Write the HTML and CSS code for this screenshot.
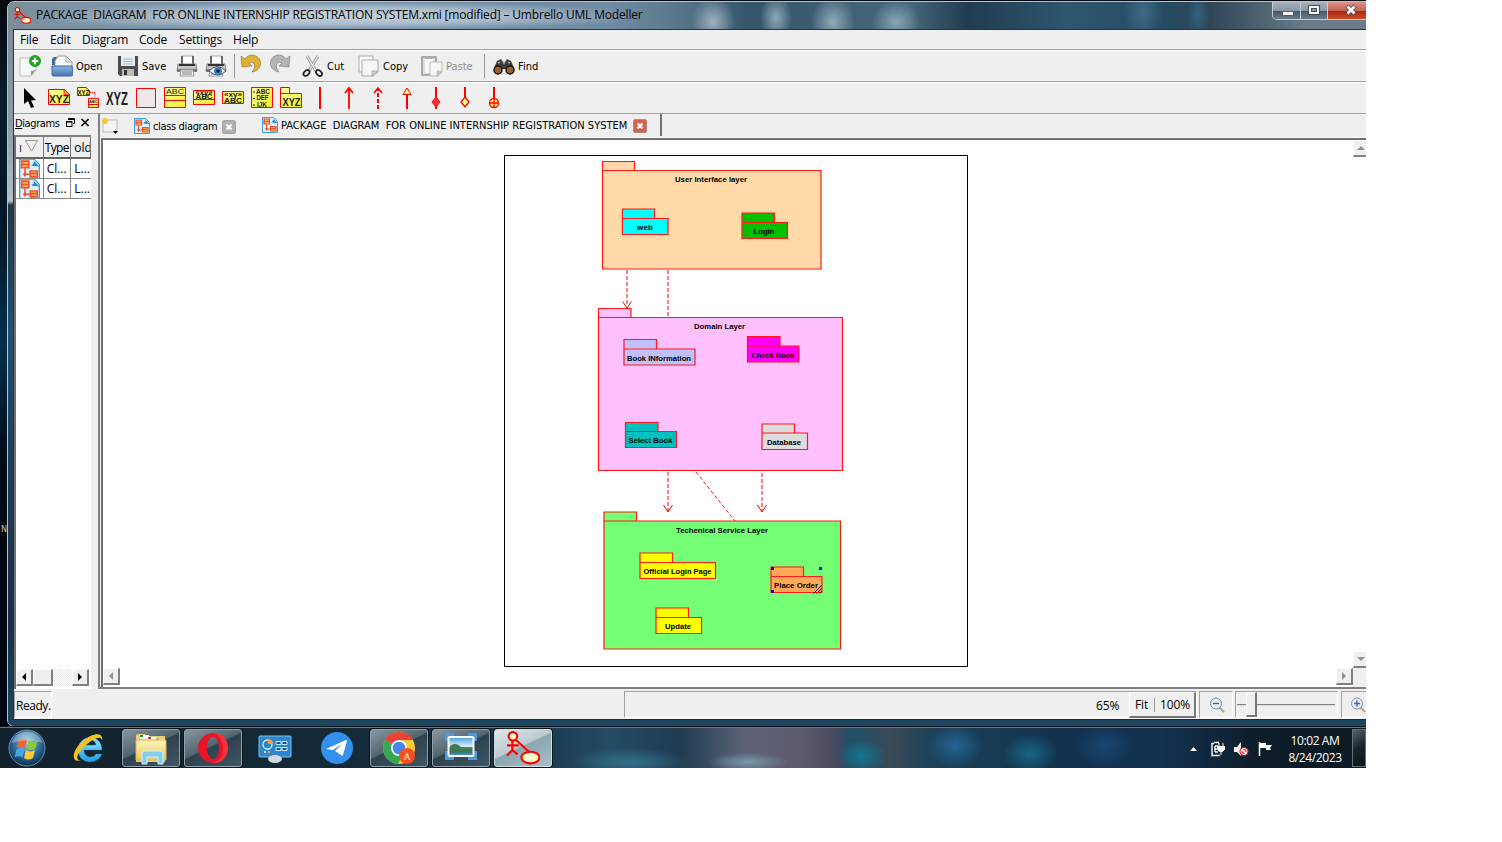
FILE: index.html
```html
<!DOCTYPE html>
<html lang="en">
<head>
<meta charset="utf-8">
<title>Umbrello UML Modeller</title>
<link rel="stylesheet" href="styles.css">
</head>
<body>
<svg width="0" height="0" class="defs" aria-hidden="true">
  <defs>
    <linearGradient id="yel" x1="0" y1="0" x2="1" y2="1"><stop offset="0" stop-color="#ffffa8"/><stop offset="1" stop-color="#f4ee20"/></linearGradient>
    <linearGradient id="blu" x1="0" y1="0" x2="0" y2="1"><stop offset="0" stop-color="#8ab4e4"/><stop offset="1" stop-color="#4678b4"/></linearGradient>
    <radialGradient id="orb" cx=".5" cy=".35" r=".65"><stop offset="0" stop-color="#9cd0ea"/><stop offset=".55" stop-color="#2f6f9f"/><stop offset="1" stop-color="#0c2f52"/></radialGradient>
    <linearGradient id="ieg" x1="0" y1="0" x2="0" y2="1"><stop offset="0" stop-color="#8be4ff"/><stop offset="1" stop-color="#1f9fe4"/></linearGradient>
    <linearGradient id="fold" x1="0" y1="0" x2="0" y2="1"><stop offset="0" stop-color="#fff4b8"/><stop offset="1" stop-color="#e8c860"/></linearGradient>
    <linearGradient id="sky" x1="0" y1="0" x2="0" y2="1"><stop offset="0" stop-color="#4a9ae8"/><stop offset=".5" stop-color="#d8f0fa"/><stop offset=".55" stop-color="#4d8a4c"/><stop offset=".75" stop-color="#2b6b70"/><stop offset="1" stop-color="#5aa0c4"/></linearGradient>
    <symbol id="uml" viewBox="0 0 32 32">
      <path d="M6 9v9M1 13.500h11M6 18l-5 5M6 18l5 4M9 8l13 12" fill="none" stroke="red" stroke-width="2"/>
      <circle cx="6.500" cy="5" r="4" fill="#ffffc8" stroke="red" stroke-width="2"/>
      <ellipse cx="23" cy="25" rx="8.500" ry="5.500" fill="#ffffc8" stroke="red" stroke-width="2"/>
    </symbol>
    <symbol id="cls" viewBox="0 0 16 16" preserveAspectRatio="xMidYMid slice">
      <path d="M.5.500h11l4 4v11H.500z" fill="#dff1fc" stroke="#3aa0e0"/>
      <path d="M10 .500c3 2 1 4-1 4.500 3 1.500 5 .5 7 1.500z" fill="#1d8cdc"/>
      <path d="M2 2h5.500v5H2zM8.500 9.500H14v4.500H8.500z" fill="#ffb060" stroke="#f05028" stroke-width="1.200"/>
      <path d="M2 4.500h5M9 11.500h5M4.500 7.500v4.500h3.500" fill="none" stroke="#f05028" stroke-width="1.100"/>
      <path d="M3 12l1.500-2L6 12l-1.500 2z" fill="#f05028"/>
    </symbol>
    <symbol id="xbtn" viewBox="0 0 14 14">
      <rect x=".5" y=".5" width="13" height="13" rx="1.500" fill="currentColor" stroke="#0003"/>
      <path d="M4.500 4.500l5 5M9.500 4.500l-5 5" stroke="#fff" stroke-width="2.200"/>
    </symbol>
    <symbol id="printer" viewBox="0 0 22 22">
      <path d="M6 1h11v9H6z" fill="#fff" stroke="#aaa"/><path d="M6 1v8M17 1v8" stroke="#444" stroke-width="1.500"/>
      <path d="M2 9h18l1 7H1z" fill="#c4c4c4" stroke="#888"/><path d="M3 10h16" stroke="#333" stroke-width="2"/>
      <path d="M1 14h20v3H1z" fill="#777"/><path d="M5 15h12l1 6H4z" fill="#fafafa" stroke="#999"/><path d="M6 17h10M6 19h10" stroke="#777"/>
    </symbol>
    <symbol id="undo" viewBox="0 0 22 22">
      <path d="M1 2l1 11 10-1-3-3c4-2 7 1 5 6l-2 3c9-1 12-12 4-16-4-2-8-1-11 3z" fill="currentColor" stroke="#0005" stroke-width=".8"/>
    </symbol>
  </defs>
</svg>

<div class="desktop">
  <span class="desk-label">N</span>
  <main class="window">
    <header class="titlebar">
      <svg class="app-icon" viewBox="0 0 32 32"><use href="#uml"/></svg>
      <h1 class="title">PACKAGE&nbsp; DIAGRAM&nbsp; FOR ONLINE INTERNSHIP REGISTRATION SYSTEM.xmi [modified] – Umbrello UML Modeller</h1>
      <div class="controls">
        <i class="ctl"><svg width="28" height="18"><rect x="9.500" y="9.500" width="11" height="4" fill="#fff" stroke="#555c66"/></svg></i>
        <i class="ctl ctl-max"><svg width="27" height="18"><rect x="7.500" y="3.500" width="11" height="9" fill="#fff" stroke="#444c58"/><rect x="10.500" y="6.500" width="5" height="3" fill="#8b98a4" stroke="#444c58"/></svg></i>
        <i class="ctl ctl-close"><svg width="38" height="18"><path d="M20 4l8 8M28 4l-8 8" stroke="#504050" stroke-width="4.500"/><path d="M20.500 4.500l7 7M27.500 4.500l-7 7" stroke="#fff" stroke-width="2.800"/></svg></i>
      </div>
    </header>

    <div class="client">
      <nav class="menubar"><span class="m-file">File</span><span class="m-edit">Edit</span><span class="m-diag">Diagram</span><span class="m-code">Code</span><span class="m-set">Settings</span><span>Help</span></nav>

      <div class="toolbar">
        <span class="tool"><svg class="ic" viewBox="0 0 22 22"><path d="M1 3h16v12l-5 6H1z" fill="#f8f8f8" stroke="#bbb"/><path d="M17 15l-5 6v-5z" fill="#999"/><circle cx="16" cy="6" r="5.600" fill="#18a818" stroke="#0a7a0a" stroke-width=".6"/><path d="M16 2.800v6.400M12.800 6h6.400" stroke="#fff" stroke-width="2.200"/></svg></span>
        <span class="tool"><svg class="ic" viewBox="0 0 22 22"><path d="M1 4l2-2h7l1 8H1z" fill="#3a68a8"/><path d="M4 6l3-5h8l6 6v5H4z" fill="#f8f8f8" stroke="#999"/><path d="M15 1v6h6z" fill="#ddd" stroke="#999" stroke-width=".7"/><path d="M1 11h20l1 8q0 2-2 2H2q-1 0-1-2z" fill="url(#blu)" stroke="#3a68a8"/></svg>Open</span>
        <span class="tool"><svg class="ic" viewBox="0 0 22 22"><path d="M1 1h20v20H3l-2-2z" fill="#4c4c4c"/><path d="M4 1h14v10H4z" fill="#e6eef8"/><path d="M6 4h10M6 6.500h10M6 9h10" stroke="#a8c0d8"/><path d="M5 14h12v7H5z" fill="#bbb"/><path d="M7 15h3v5H7z" fill="#333"/></svg>Save</span>
        <span class="tool"><svg class="ic"><use href="#printer"/></svg></span>
        <span class="tool"><svg class="ic" viewBox="0 0 22 22"><use href="#printer"/><path d="M4 16q8-9 17 0-8 8-17 0z" fill="#f0f4f8" stroke="#555"/><circle cx="13" cy="16" r="4" fill="#3a80c0"/><circle cx="13" cy="16" r="1.600" fill="#111"/></svg></span>
        <i class="sep"></i>
        <span class="tool gold"><svg class="ic up"><use href="#undo"/></svg></span>
        <span class="tool mute"><svg class="ic up flip"><use href="#undo"/></svg></span>
        <span class="tool"><svg class="ic" viewBox="0 0 22 22"><path d="M5 1l9 15M16 1L7 16" stroke="#999" stroke-width="3"/><path d="M5 1l9 15M16 1L7 16" stroke="#eee" stroke-width="1.200"/><ellipse cx="4.500" cy="18" rx="3.500" ry="2.300" transform="rotate(-45 4.500 18)" fill="none" stroke="#222" stroke-width="1.800"/><ellipse cx="17" cy="18" rx="3.500" ry="2.300" transform="rotate(45 17 18)" fill="none" stroke="#222" stroke-width="1.800"/></svg>Cut</span>
        <span class="tool"><svg class="ic" viewBox="0 0 22 22"><path d="M1 1h14v16H1z" fill="#fafafa" stroke="#aaa"/><path d="M4 5h16v12l-5 4H4z" fill="#f6f6f6" stroke="#aaa"/><path d="M20 16l-6 5v-5z" fill="#ccc" stroke="#999" stroke-width=".6"/></svg>Copy</span>
        <span class="tool off"><svg class="ic" viewBox="0 0 22 22"><path d="M1 2h14v18H1z" fill="#ddd" stroke="#999" stroke-width="1.600"/><path d="M4 4h8v14H4z" fill="#f8f8f8"/><path d="M4 4q4-6 8 0z" fill="#aaa"/><path d="M9 7h12v10l-4 4H9z" fill="#f6f6f6" stroke="#bbb"/><path d="M21 16l-5 5v-5z" fill="#ccc" stroke="#aaa" stroke-width=".6"/></svg>Paste</span>
        <i class="sep"></i>
        <span class="tool"><svg class="ic" viewBox="0 0 22 22"><path d="M4 6l4-2 2 3h2l2-3 4 2 3 7v4H13v-3H9v3H1v-4z" fill="#3c3c3c"/><path d="M5 8l2-1M15 7l2 1" stroke="#aaa" stroke-width="1.500"/><circle cx="5" cy="15" r="4" fill="#a06030" stroke="#111" stroke-width="1.500"/><circle cx="17" cy="15" r="4" fill="#a06030" stroke="#111" stroke-width="1.500"/><circle cx="11" cy="8" r="1.300" fill="#999"/></svg>Find</span>
      </div>

      <div class="palette">
        <svg viewBox="0 0 22 22"><path d="M5 1l12 12-5 .5 3 6.500-3 1-3-7-4 3z" fill="#000"/></svg>
        <svg viewBox="0 0 22 22"><path d="M.5 2.500h16l5 5v10H.500z" fill="url(#yel)" stroke="red"/><path d="M16 2v6h6z" fill="#ff9820" stroke="red" stroke-width=".7"/><text class="gl wide" x="11" y="16" textLength="20" lengthAdjust="spacingAndGlyphs">XYZ</text></svg>
        <svg viewBox="0 0 22 22"><path d="M.5.500h9l3 3v5H.500z" fill="url(#yel)" stroke="red"/><path d="M9 0v4h4z" fill="#ff9820"/><text class="gl tiny" x="6.500" y="7.500" textLength="12" lengthAdjust="spacingAndGlyphs">XYZ</text><path d="M13 5.500h5v5" fill="none" stroke="red" stroke-dasharray="1 1"/><path d="M11.500 11.500h10v9h-10zM11.500 17.500h10" fill="url(#yel)" stroke="red"/><text class="gl micro" x="16.500" y="16" textLength="9">ABC</text></svg>
        <svg viewBox="0 0 22 22"><text class="gl big" x="11" y="18" textLength="22" lengthAdjust="spacingAndGlyphs">XYZ</text></svg>
        <svg viewBox="0 0 22 22"><path d="M1.500 1.500h19v19h-19z" fill="#f0e8e8" stroke="red"/></svg>
        <svg viewBox="0 0 22 22"><path d="M.5.500h21v20H.500zM.5 8.500h21M.5 13.500h21" fill="url(#yel)" stroke="red"/><text class="gl reg" x="11" y="7" textLength="18" lengthAdjust="spacingAndGlyphs">ABC</text></svg>
        <svg viewBox="0 0 22 22"><path d="M.5 3.500h21v14H.500zM.5 12.500h21" fill="url(#yel)" stroke="red"/><text class="gl tiny" x="11" y="7.500" textLength="17" lengthAdjust="spacingAndGlyphs">«xy»</text><text class="gl tiny" x="11" y="12" textLength="17" lengthAdjust="spacingAndGlyphs">ABC</text></svg>
        <svg viewBox="0 0 22 22"><path d="M.5 4.500h21v12H.500z" fill="url(#yel)" stroke="red"/><text class="gl tiny" x="11" y="9.500" textLength="18" lengthAdjust="spacingAndGlyphs">«xy»</text><text class="gl small" x="11" y="15.500" textLength="18" lengthAdjust="spacingAndGlyphs">ABC</text></svg>
        <svg viewBox="0 0 22 22"><path d="M.5.500h21v20H.500z" fill="url(#yel)" stroke="red"/><text class="gl tiny" x="12" y="6.500" textLength="14" lengthAdjust="spacingAndGlyphs">ABC</text><text class="gl tiny" x="11.500" y="13" textLength="12" lengthAdjust="spacingAndGlyphs">DEF</text><text class="gl tiny" x="11" y="19.500" textLength="10" lengthAdjust="spacingAndGlyphs">IJK</text><path d="M2 5h2M2 11.500h2M2 18h2" stroke="#222"/></svg>
        <svg viewBox="0 0 22 22"><path d="M.5.500h9v6h12v14H.500zM.5 6.500h9" fill="url(#yel)" stroke="red"/><text class="gl wide" x="11.500" y="19" textLength="18" lengthAdjust="spacingAndGlyphs">XYZ</text></svg>
        <svg viewBox="0 0 22 22"><path d="M11 0v22" stroke="red" stroke-width="2"/></svg>
        <svg viewBox="0 0 22 22"><path d="M11 1v21M7 6l4-5 4 5" fill="none" stroke="red" stroke-width="1.800"/></svg>
        <svg viewBox="0 0 22 22"><path d="M11 22V1" stroke="red" stroke-width="2" stroke-dasharray="4 2"/><path d="M7 6l4-5 4 5" fill="none" stroke="red" stroke-width="1.600"/></svg>
        <svg viewBox="0 0 22 22"><path d="M11 7v15" stroke="red" stroke-width="2"/><path d="M11 1l4 6.500H7z" fill="#ffff70" stroke="red"/></svg>
        <svg viewBox="0 0 22 22"><path d="M11 0v22" stroke="red" stroke-width="2"/><path d="M11 10l4 5-4 5-4-5z" fill="#f83030" stroke="red"/></svg>
        <svg viewBox="0 0 22 22"><path d="M11 0v11" stroke="red" stroke-width="2"/><path d="M11 10l4 5-4 5-4-5z" fill="#ffff90" stroke="red" stroke-width="1.300"/></svg>
        <svg viewBox="0 0 22 22"><path d="M11 0v11" stroke="red" stroke-width="2"/><circle cx="11" cy="16" r="4.500" fill="#ffff70" stroke="red" stroke-width="1.300"/><path d="M11 12v9M6 16h10" stroke="red" stroke-width="1.300"/></svg>
      </div>

      <div class="work">
        <aside class="dock">
          <div class="dock-head"><span class="dock-name"><u>D</u>iagrams</span><svg width="24" height="12"><path d="M3.500 3V1.500h6v5H8M1 4.500h6v5H1.500V4M1 5h6M3.500 2.500h6" fill="none" stroke="#000"/><path d="M16.500 2l7 7M23.500 2l-7 7" stroke="#000" stroke-width="1.600"/></svg></div>
          <div class="tree">
            <div class="row head"><span class="c1"><b>ı</b><svg width="13" height="12"><path d="M.5.500h12L6.500 11z" fill="none" stroke="#999"/></svg></span><span class="c2"><em>Type</em></span><span class="c3">old</span></div>
            <div class="row"><span class="c1"><svg class="rowic"><use href="#cls"/></svg></span><span class="c2">Cl...</span><span class="c3">L...</span></div>
            <div class="row"><span class="c1"><svg class="rowic"><use href="#cls"/></svg></span><span class="c2">Cl...</span><span class="c3">L...</span></div>
            <div class="hscroll"><i class="sb"><svg width="6" height="8"><path d="M5 0v8L1 4z"/></svg></i><i class="sb thumb"></i><i class="track"></i><i class="sb"><svg width="6" height="8"><path d="M1 0v8l4-4z"/></svg></i></div>
          </div>
        </aside>

        <section class="editor">
          <div class="tabs">
            <svg class="newtab" viewBox="0 0 20 18"><path d="M2 3h14v10l-2 2H2z" fill="#f4f4f4" stroke="#bbb"/><circle cx="4" cy="4" r="3" fill="#f0c838"/><path d="M12 14h5l-2.500 3z"/></svg>
            <div class="tab"><svg class="tabic"><use href="#cls"/></svg><span class="tab-a">class diagram</span><svg class="x gray"><use href="#xbtn"/></svg></div>
            <div class="tab active"><svg class="tabic"><use href="#cls"/></svg><span class="tab-b">PACKAGE&nbsp; DIAGRAM&nbsp; FOR ONLINE INTERNSHIP REGISTRATION SYSTEM</span><svg class="x red"><use href="#xbtn"/></svg></div>
          </div>
          <div class="canvas">
            <svg class="diagram" viewBox="504 154 465 514" width="465" height="514">
              <path d="M504 155.500h463.500v511H504.500V155" fill="#fff" stroke="#000"/>
              <g class="pkg">
                <path fill="#ffdaa8" d="M602.500 170.500v-9h32v9M602.500 170.500h218.500v98.500h-218.500z"/>
                <path fill="#0ff" d="M622.500 218v-9h32v9M622.500 218.500h45.500v16h-45.500z"/>
                <path fill="#00c000" d="M742 222v-9h32.500v9M742 222.500h45.500v16h-45.500z"/>
                <path fill="#ffc0ff" d="M598.500 317.500v-9h32.500v9M598.500 317.500h244v153h-244z"/>
                <path fill="#c0c0ff" d="M624 348.500v-9h32.500v9M624 349h71v16h-71z"/>
                <path fill="#f0f" d="M747.500 346v-9.500h32.500v9.500M747.500 346h51.500v16h-51.500z"/>
                <path fill="#00c0c0" d="M625.500 431.500v-9h32.500v9M625.500 431.500h51v16h-51z"/>
                <path fill="#dcdcdc" d="M762 433v-9h32.500v9M762 433h45.500v16.500h-45.500z"/>
                <path fill="#75ff75" d="M604 521v-9h32.500v9M604 521h236.500v128h-236.500z"/>
                <path fill="#ff0" d="M640 562v-9h32.500v9M640 562.500h75.500v16h-75.500z"/>
                <path fill="#ffa858" d="M771 576v-9h32.500v9M771 576.500h51v16h-51z"/>
                <path fill="#ff0" d="M656 617v-9h32.500v9M656 617.500h45.500v16h-45.500z"/>
              </g>
              <g class="dep"><path d="M627 270v36"/><path d="M668 270v47"/><path d="M668 472v39"/><path d="M762 473v38"/><path class="thin" d="M696 472l39 49"/></g>
              <g class="arrows"><path d="M622.500 301.500l4.500 6.500 4.500-6.500"/><path d="M663.500 505l4.500 7 4.500-7"/><path d="M757.500 505l4.500 7 4.500-7"/></g>
              <g class="lbl">
                <text x="711" y="182" textLength="72" lengthAdjust="spacingAndGlyphs">User Interface layer</text>
                <text x="645" y="229.500" textLength="16">web</text>
                <text x="764" y="234" textLength="21">Login</text>
                <text x="719.500" y="329" textLength="51" lengthAdjust="spacingAndGlyphs">Domain Layer</text>
                <text x="659" y="361" textLength="64" lengthAdjust="spacingAndGlyphs">Book INformation</text>
                <text x="773" y="358" textLength="43" lengthAdjust="spacingAndGlyphs">Check Book</text>
                <text x="650.500" y="443" textLength="44" lengthAdjust="spacingAndGlyphs">Select Book</text>
                <text x="784" y="445" textLength="34" lengthAdjust="spacingAndGlyphs">Database</text>
                <text x="722" y="533" textLength="92" lengthAdjust="spacingAndGlyphs">Techenical Service Layer</text>
                <text x="677.500" y="574" textLength="68" lengthAdjust="spacingAndGlyphs">Official Login Page</text>
                <text x="796" y="588" textLength="44" lengthAdjust="spacingAndGlyphs">Place Order</text>
                <text x="678" y="629" textLength="26" lengthAdjust="spacingAndGlyphs">Update</text>
              </g>
              <path d="M771 567h3v3h-3zM819 567h3v3h-3zM771 590h3v3h-3z" fill="#00f"/>
              <path d="M813.500 593.500l8-8M816.500 593.500l5-5M819.500 593.500l2.500-2.500" stroke="#000" stroke-width=".9"/>
            </svg>
            <div class="vbar"><i class="sb"><svg width="10" height="8"><path d="M1 6h8L5 2z" fill="#909090"/></svg></i><i class="sb"><svg width="10" height="8"><path d="M1 2h8L5 6z" fill="#909090"/></svg></i></div>
            <div class="hbar"><i class="sb"><svg width="6" height="8"><path d="M5 0v8L1 4z" fill="#909090"/></svg></i><i class="sb"><svg width="6" height="8"><path d="M1 0v8l4-4z" fill="#909090"/></svg></i><i class="corner"></i></div>
          </div>
        </section>
      </div>

      <footer class="status">
        <span class="ready">Ready.</span>
        <span class="msg"><span class="pct">65%</span><span class="fit"><span>Fit</span><span class="hundred">100%</span></span></span>
        <span class="zo"><svg width="17" height="18" viewBox="0 0 17 18"><path d="M10 11l5 5" stroke="#b0a090" stroke-width="2"/><circle cx="7" cy="7.500" r="5.500" fill="#e4eef8" stroke="#7890b0"/><path d="M4 7.500h6" stroke="#4068a0" stroke-width="1.400"/></svg></span>
        <span class="slider"><i class="groove"></i><i class="knob"></i><i class="groove rest"></i></span>
        <span class="zi"><svg width="17" height="18" viewBox="0 0 17 18"><path d="M10 11l5 5" stroke="#b0a090" stroke-width="2"/><circle cx="7" cy="7.500" r="5.500" fill="#e4eef8" stroke="#7890b0"/><path d="M4 7.500h6M7 4.500v6" stroke="#4068a0" stroke-width="1.400"/></svg></span>
      </footer>
    </div>
  </main>

  <footer class="taskbar">
    <div class="start"><svg width="40" height="38" viewBox="0 0 40 38"><circle cx="20" cy="19" r="18" fill="url(#orb)" stroke="#6a8ea4"/><path d="M12 11q5-3 8 0l-2 8q-4-3-8 0z" fill="#f0642c"/><path d="M21.500 11.500q4 3 9 0l-2 8q-5 3-9 0z" fill="#8cc83c"/><path d="M9.500 20.500q4-3 8 0l-2 8q-4-3-8 0z" fill="#4aa4e8"/><path d="M19 21q4 3 9 0l-2 8q-5 3-9 0z" fill="#fccc38"/><path d="M4 14Q9 3 20 2.500T36 14q-16-5-32 0z" fill="#fff" opacity=".3"/></svg></div>
    <div class="task"><svg width="34" height="34" viewBox="0 0 34 34"><path d="M30 19H12c0 8 9 9 12 4h6c-5 12-24 10-24-4C6 3 30 2 30 19zM12 14h12c-1-7-11-7-12 0z" fill="url(#ieg)" fill-rule="evenodd" stroke="#1474b8" stroke-width=".4"/><path d="M30 10C32 0 20 2 11 10-1 20-1 33 9 29c-5 1-6-5 4-14C22 7 30 4 30 10z" fill="#f4c424"/></svg></div>
    <div class="task on"><svg width="34" height="34" viewBox="0 0 34 34"><path d="M2 5l1-2h8l1 2h19v26H2z" fill="#e8d080"/><path d="M6 4h9v4H6zM13 6h9v4h-9zM21 8h9v3h-9z" fill="#fff"/><path d="M6 4h3v2H6z" fill="#1a9c28"/><path d="M14 6h3v2h-3z" fill="#d83020"/><path d="M22 8h3v2h-3z" fill="#2888d8"/><path d="M2 9h30v20H2z" fill="url(#fold)" stroke="#d8b850"/><path d="M8 33V23q0-3 3-3h15q3 0 3 3v10h-5v-7H13v7z" fill="#88cce8" stroke="#d0f0ff"/></svg></div>
    <div class="task on"><svg width="34" height="34" viewBox="0 0 34 34"><path fill-rule="evenodd" d="M17 2a15 15 0 1 0 0 30 15 15 0 0 0 0-30zm0 4c4 0 6 5 6 11s-2 11-6 11-6-5-6-11 2-11 6-11z" fill="#e81428"/><path d="M17 2c10-1 15 8 15 15s-5 16-15 15c9-3 10-9 10-15S24 4 17 2z" fill="#ff3040"/></svg></div>
    <div class="task"><svg width="34" height="34" viewBox="0 0 34 34"><rect x="1" y="5" width="32" height="21" rx="1" fill="#2f86cc" stroke="#78c4f0"/><circle cx="9.500" cy="13.500" r="4.500" fill="none" stroke="#d8f0ff" stroke-width="1.300"/><path d="M10 13V8q5 0 5 5z" fill="#fca030"/><path d="M18 10.500h5v3h-5zM24 10.500h5v3h-5zM18 16.500h5v3h-5zM24 16.500h5v3h-5z" fill="#0a5c9c" stroke="#c8ecff"/><circle cx="7" cy="21" r="1" fill="#fff"/><circle cx="11" cy="21" r="1.200" fill="#fca030"/><ellipse cx="17" cy="28" rx="7" ry="4" fill="#d4d8dc"/></svg></div>
    <div class="task"><svg width="34" height="34" viewBox="0 0 34 34"><circle cx="17" cy="17" r="16" fill="#3390ec"/><path d="M6 18L26 9q1 0 1 1l-4 14q-1 1-2 0l-6-4 7-7-9 6z" fill="#fff"/></svg></div>
    <div class="task on"><svg width="34" height="34" viewBox="0 0 34 34"><circle cx="17" cy="17" r="16" fill="#fcc934"/><path d="M17 17L3.200 9A16 16 0 0 1 31 9H17z" fill="#ea4335"/><path d="M3.200 9a16 16 0 0 0 13 24l6-13z" fill="#34a853"/><circle cx="17" cy="17" r="8" fill="#fff"/><circle cx="17" cy="17" r="6.300" fill="#4285f4"/><circle cx="25" cy="25" r="8" fill="#f4511e"/><text class="badge" x="25" y="28.500">A</text></svg></div>
    <div class="task on"><svg width="34" height="34" viewBox="0 0 34 34"><path d="M3 10V4h7M24 4h7v6M31 20v7h-7M10 27H3v-7" fill="none" stroke="#4a9ae0" stroke-width="4"/><rect x="4.500" y="6" width="25" height="19" rx="1" fill="url(#sky)" stroke="#f8f8f8" stroke-width="2"/><path d="M6 15q6-5 13 3l9 1v2H6z" fill="#3f7a50"/></svg></div>
    <div class="task on current"><svg width="34" height="34" viewBox="0 0 34 34"><use href="#uml" width="34" height="34"/></svg></div>
    <div class="tray">
      <svg width="86" height="18" viewBox="0 0 86 18"><path d="M1 11h7L4.500 7z" fill="#fff"/><path d="M30 14.500v1h-7v-12h2M25 2.500h5M26 6v6M26 6h3M26 9h2M26 12h3" fill="none" stroke="#fff" stroke-width="1.400"/><path d="M28.500 6.500h7v3q-1 2-3.500 2t-3.500-2zM32 11v4M30 3v3M34 3v3" fill="#fff" stroke="#fff"/><path d="M45 7h3l4-5v14l-4-4h-3z" fill="#f4f4f4"/><circle cx="55" cy="11.500" r="4.500" fill="#e01818"/><path d="M53 9.500l4 4" stroke="#fff" stroke-width="1.800"/><circle cx="55" cy="11.500" r="3" fill="none" stroke="#fff"/><path d="M70.500 2v14" stroke="#fff" stroke-width="1.500"/><path d="M71 3h6v2h6l-2 3 1 2h-5V8h-6z" fill="#fff"/></svg>
    </div>
    <div class="clock"><span>10:02 AM</span><span>8/24/2023</span></div>
    <div class="peek"></div>
  </footer>
</div>
</body>
</html>
```
FILE: styles.css
```css
* { box-sizing: border-box; }
body { margin: 0; background: #fff; font-family: "Open Sans", "Noto Sans", sans-serif; color: #000; overflow: hidden; }
.defs { position: absolute; }
i, em { font-style: normal; }
span, h1 { white-space: pre; }

.desktop {
  position: relative;
  width: 1366px;
  height: 768px;
  overflow: hidden;
  padding: 1px 0 0 7px;
  display: flex;
  flex-direction: column;
  background: linear-gradient(180deg, #05080f 0, #0a1c2c 100px, #031726 230px, #043050 340px, #020e1c 450px, #010712 560px, #010712 100%);
}
.desk-label { position: absolute; left: 1px; top: 523px; font: 9px/13px "DejaVu Sans Condensed", sans-serif; color: #b8c8b0; letter-spacing: -1px; }

.window {
  width: 1380px;
  height: 726px;
  flex: none;
  border: 1px solid #b4c4cc;
  border-radius: 7px 0 0 7px;
  padding-left: 5px;
  background: linear-gradient(180deg, #7b8995 0, #8c9aa6 120px, #b4c0c8 199px, #21374a 203px, #24506c 330px, #1c3c54 480px, #143048 620px, #1e4660 100%);
}
.titlebar {
  height: 27px;
  margin-left: -5px;
  display: flex;
  border-radius: 6px 0 0 0;
  background:
    radial-gradient(ellipse 310px 15px at 330px 14px, #d5dfe8e0 0, #c4d0dcb0 55%, transparent 100%),
    radial-gradient(ellipse 22px 26px at 705px 20px, #9db2c0, transparent),
    radial-gradient(ellipse 16px 24px at 768px 16px, #8ea8b8, transparent),
    radial-gradient(ellipse 22px 26px at 825px 20px, #90aab8, transparent),
    radial-gradient(ellipse 24px 22px at 888px 20px, #86a6b6, transparent),
    radial-gradient(ellipse 20px 30px at 1135px 10px, #3f6a88, transparent),
    radial-gradient(ellipse 12px 26px at 1190px 12px, #356080, transparent),
    linear-gradient(90deg, #7c8c98 0, #7d93a5 60px, #6e8ba4 300px, #6f8ca3 600px, #5d7b8e 660px, #35566b 740px, #47687b 900px, #203c50 960px, #2e566f 1060px, #264b62 1160px, #2e4556 1200px, #6b7c88 1300px);
}
.app-icon { width: 17px; height: 17px; margin: 5px 0 0 6px; flex: none; }
.title { margin: 0 0 0 5px; padding-top: 3px; width: 1236px; font-size: 12px; line-height: 20px; font-weight: 400; letter-spacing: -0.175px; }
.controls { display: flex; height: 18px; border: 1px solid #c4ced4; border-top: 0; border-radius: 0 0 0 5px; overflow: hidden; flex: none; }
.ctl { width: 28px; height: 18px; border-right: 1px solid #c4ced4; background: linear-gradient(#a8b4be 0, #8797a3 48%, #485a68 52%, #6e8090 100%); }
.ctl-max { width: 27px; }
.ctl-close { width: 50px; background: linear-gradient(#d89488 0, #c86450 48%, #ac2810 52%, #d0502c 100%); }
.ctl svg { display: block; }
.ctl-close svg { margin-left: -1px; }

.client { height: 691px; background: #efefef; border-left: 1px solid #28333c; border-top: 1px solid #28333c; border-bottom: 1px solid #202c34; display: flex; flex-direction: column; }
.menubar { height: 20px; padding-left: 6px; display: flex; font-size: 12px; line-height: 20px; border-bottom: 1px solid #a0a0a0; flex: none; letter-spacing: -0.2px; }
.m-file { width: 30px; }
.m-edit { width: 32px; }
.m-diag { width: 57px; }
.m-code { width: 40px; }
.m-set { width: 54px; }

.toolbar {
  height: 32px;
  padding-left: 5px;
  display: grid;
  grid-template-columns: 32px 66px 59px 29px 29px 6px 29px 33px 56px 63px 63px 9px 100px;
  border-top: 1px solid #fff;
  border-bottom: 1px solid #a0a0a0;
  flex: none;
  font: 11px "DejaVu Sans Condensed", "DejaVu Sans", sans-serif;
  letter-spacing: 0;
}
.tool { display: flex; align-items: center; gap: 3px; }
.ic { width: 22px; height: 22px; flex: none; }
.up { margin-top: -3px; }
.flip { transform: scaleX(-1); }
.gold { color: #e0b030; }
.mute { color: #b4b4b4; }
.off { color: #8c8c8c; }
.sep { width: 1px; height: 24px; margin-top: 3px; background: #999; }

.palette { height: 32px; padding-left: 5px; display: flex; gap: 7px; align-items: center; border-top: 1px solid #fff; border-bottom: 1px solid #a0a0a0; flex: none; }
.palette svg { width: 22px; height: 22px; flex: none; overflow: visible; }
.gl { font-family: "Liberation Sans", sans-serif; font-weight: 700; text-anchor: middle; fill: #222; }
.wide { font-size: 10px; }
.big { font-size: 19px; }
.reg { font-size: 8px; font-weight: 400; }
.small { font-size: 7.5px; }
.tiny { font-size: 6.5px; }
.micro { font-size: 4px; }

.work { height: 575px; display: flex; flex: none; }
.dock { width: 79px; padding-right: 2px; display: flex; flex-direction: column; }
.dock-head { height: 21px; display: flex; padding-top: 3px; font: 11px/14px "DejaVu Sans Condensed", sans-serif; }
.dock-name { width: 51px; letter-spacing: -0.4px; padding-left: 1px; }
.tree { height: 554px; border-left: 2px solid #707070; border-top: 2px solid #808080; background: #fff; display: flex; flex-direction: column; overflow: hidden; }
.row { height: 20px; display: flex; font-size: 12px; line-height: 19px; border-bottom: 1px solid #888; }
.row > span { border-right: 1px solid #888; overflow: hidden; height: 19px; }
.row .c1 { width: 28px; padding-left: 3px; }
.row .c2 { width: 28px; padding-left: 3px; }
.row .c3 { width: 20px; padding-left: 3px; border-right: 0; }
.row.head { height: 22px; border-bottom: 2px solid #666; }
.row.head > span { background: #efefef; height: 20px; line-height: 21px; border-right: 1px solid #777; }
.row.head b { font-weight: 400; margin-right: 3px; color: #402050; }
.c2 em { display: block; margin-left: -2px; letter-spacing: -0.6px; }
.rowic { width: 21px; height: 20px; display: block; }
.hscroll { margin-top: auto; height: 18px; margin-bottom: 2px; display: flex; padding-right: 2px; }
.sb { width: 17px; height: 17px; display: flex; align-items: center; justify-content: center; background: #efefef; border: 1px solid #fff; border-right: 2px solid #808080; border-bottom: 2px solid #808080; flex: none; }
.thumb { width: 20px; }
.track { flex: 1; background: repeating-conic-gradient(#fff 0 25%, #e8e8e8 0 50%) 0 0/2px 2px; }

.editor { flex: 1; margin-left: 5px; border-left: 2px solid #808080; border-bottom: 2px solid #808080; display: flex; flex-direction: column; min-width: 0; }
.tabs { height: 24px; display: flex; border-bottom: 1px solid #fff; }
.newtab { width: 20px; height: 18px; margin: 3px 13px 0 1px; }
.tab { display: flex; height: 22px; padding-top: 4px; width: 128px; font: 11px/17px "DejaVu Sans Condensed", sans-serif; }
.tab.active { width: 400px; padding-top: 3px; border-right: 2px solid #707070; }
.tabic { width: 16px; height: 16px; margin-right: 3px; flex: none; }
.tab-a { width: 69px; letter-spacing: -0.35px; }
.tab-b { width: 352px; letter-spacing: 0; }
.x { width: 14px; height: 14px; margin-top: 2px; }
.gray { color: #b0b0b0; }
.red { color: #dc6048; }
.canvas { flex: 1; margin-left: 1px; border-left: 2px solid #707070; border-top: 2px solid #707070; background: #fff; display: grid; grid-template-columns: 1250px 1fr; grid-template-rows: 528px 1fr; min-height: 0; overflow: hidden; }
.diagram { margin: 14px 0 0 401px; display: block; }
.pkg path { stroke: #ff1818; stroke-width: 1.2; }
.dep path { stroke: #ff4040; stroke-width: 1.3; stroke-dasharray: 4 2; fill: none; }
.dep .thin { stroke-width: 1; stroke: #f02020; }
.arrows path { fill: none; stroke: red; }
.lbl text { font: bold 8px "Liberation Sans", sans-serif; text-anchor: middle; }
.vbar { display: flex; flex-direction: column; justify-content: space-between; }
.hbar { grid-column: 1 / 3; display: flex; align-items: flex-start; }
.hbar .sb { height: 17px; }
.hbar .sb + .sb { margin-left: 1216px; }
.corner { flex: 1; height: 19px; background: #efefef; }

.status { height: 30px; padding-top: 2px; display: flex; font-size: 12px; line-height: 27px; letter-spacing: -0.15px; }
.status > span { height: 27px; border: 1px solid #a0a0a0; border-right-color: #fff; border-bottom-color: #fff; flex: none; }
.ready { width: 38px; padding-left: 1px; letter-spacing: -0.45px; }
.status .msg { width: 573px; margin-left: 572px; display: flex; padding-left: 471px; }
.pct { width: 33px; }
.fit { width: 67px; height: 26px; padding-left: 5px; display: flex; border: 1px solid #fff; border-right: 2px solid #777; border-bottom: 2px solid #777; line-height: 24px; }
.hundred { position: relative; padding-left: 12px; }
.hundred::before { content: ""; position: absolute; left: 6px; top: 5px; height: 14px; width: 1px; background: #999; }
.status .zo { width: 34px; margin-left: 2px; padding: 4px 0 0 9px; line-height: 0; }
.status .slider { width: 103px; margin-left: 2px; display: flex; align-items: center; padding: 0 2px 0 1px; }
.groove { width: 9px; height: 2px; background: #808080; border-bottom: 1px solid #ddd; }
.rest { flex: 1; }
.knob { width: 11px; height: 25px; background: #efefef; border: 1px solid #fff; border-right: 2px solid #777; border-bottom: 2px solid #777; }
.status .zi { width: 50px; margin-left: 3px; padding: 4px 0 0 8px; line-height: 0; }

.taskbar {
  height: 41px;
  margin-left: -7px;
  display: flex;
  padding-top: 1px;
  border-top: 1px solid #64747e;
  box-shadow: 0 -1px #10181e;
  flex: none;
  background:
    radial-gradient(ellipse 40px 9px at 748px 34px, #7a98aa, transparent),
    radial-gradient(ellipse 24px 17px at 862px 28px, #14758f, transparent),
    radial-gradient(ellipse 28px 22px at 955px 18px, #246294, transparent),
    radial-gradient(ellipse 28px 20px at 1030px 26px, #176684, transparent),
    radial-gradient(ellipse 30px 22px at 1105px 18px, #184670, transparent),
    radial-gradient(ellipse 60px 14px at 630px 34px, #33708a, transparent),
    linear-gradient(50deg, transparent 0 100%),
    linear-gradient(90deg, #13222e 0, #142a39 350px, #1b3c52 550px, #244c64 610px, #1e3b50 680px, #3f5166 715px, #5f637a 745px, #5c5a6e 800px, #4a4a60 835px, #1e5068 850px, #3a4a58 890px, #1c4258 930px, #123250 1060px, #123250 1160px, #0d1d2a 1260px, #0d1821 100%);
}
.start { width: 58px; padding-left: 7px; }
.start svg { display: block; }
.task { width: 58px; height: 38px; margin: 0 2px; border: 1px solid transparent; border-radius: 3px; display: flex; align-items: center; justify-content: center; }
.on { border-color: #93a3ad; background: linear-gradient(155deg, #8797a1 0, #53656f 45%, #2e424e 48%, #405664 100%); box-shadow: 0 0 0 1px #0b151c; }
.current { border-color: #d4dde2; background: linear-gradient(155deg, #dfe6e9 0, #bccbd0 45%, #8ba6b0 48%, #a9c1c8 100%); }
.badge { font: 9px "Open Sans", sans-serif; fill: #fff; text-anchor: middle; }
.tray { width: 87px; margin-left: auto; padding-top: 11px; }
.clock { width: 76px; display: flex; flex-direction: column; align-items: center; padding: 3px 0 0 2px; color: #fff; font-size: 12px; line-height: 17px; letter-spacing: -0.4px; }
.peek { width: 14px; height: 38px; border: 1px solid #657078; background: linear-gradient(150deg, #54626a 0, #17232b 50%, #0c151b 100%); }
```
